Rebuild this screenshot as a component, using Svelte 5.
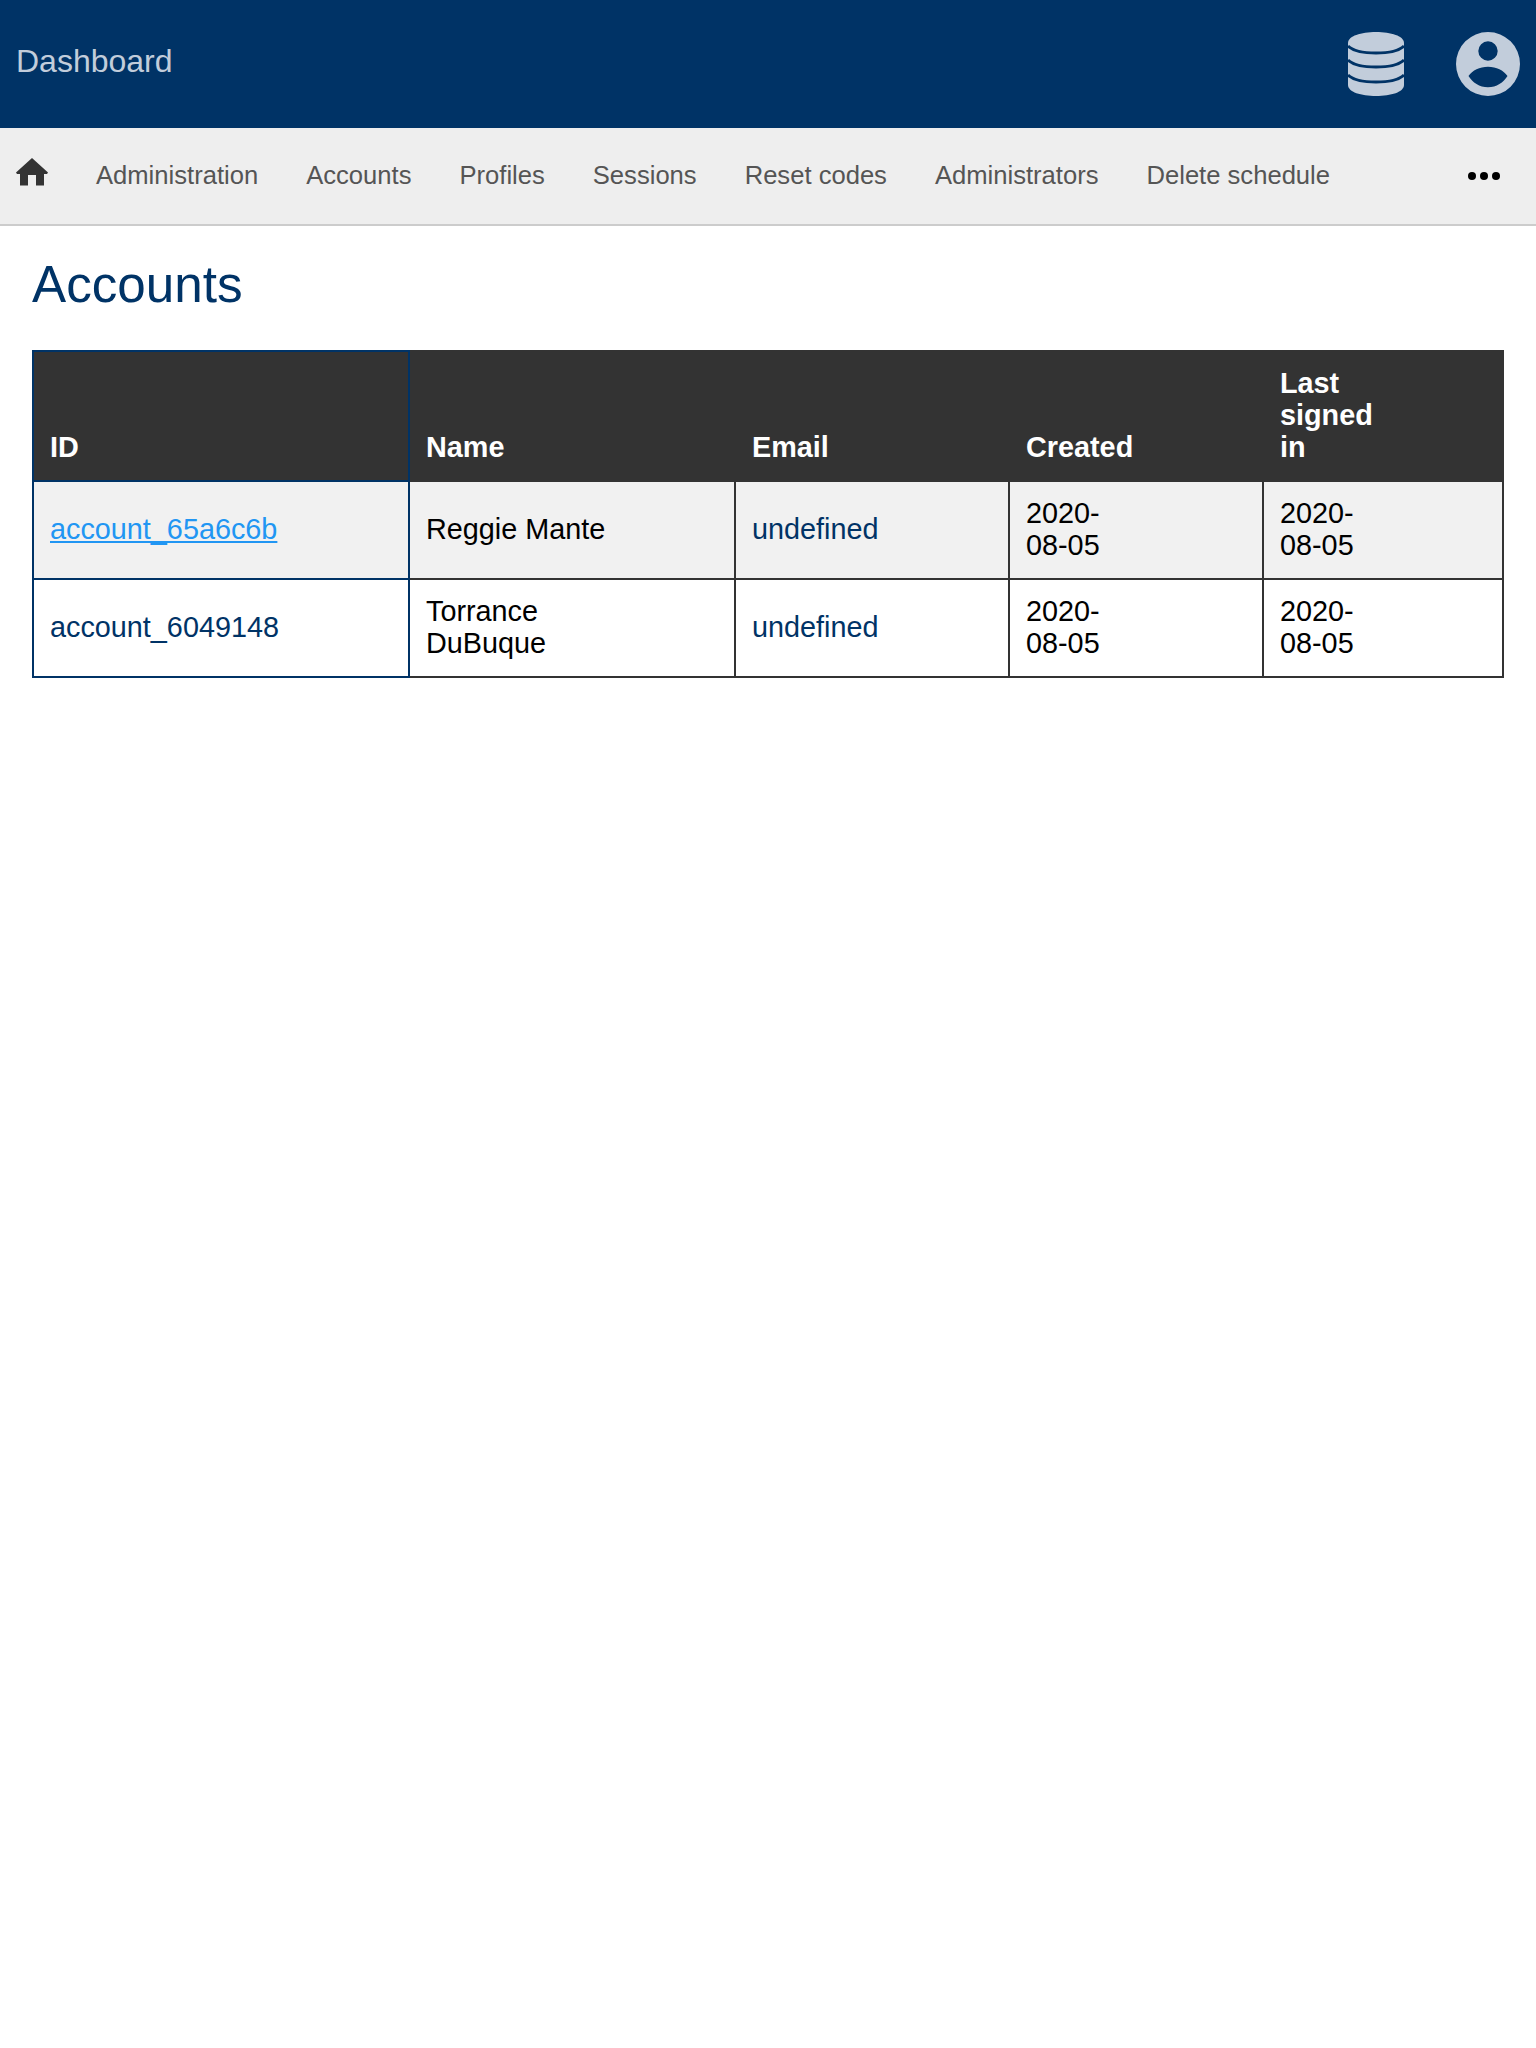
<script>
  const links = ['Administration','Accounts','Profiles','Sessions','Reset codes','Administrators','Delete schedule'];
  const cols = [376,326,274,254,240];
</script>

<header class="top">
  <span class="brand">Dashboard</span>
  <div class="top-icons">
    <svg class="db" viewBox="0 0 56 64" aria-hidden="true">
      <path class="body" d="M0 11C0 4 13 0 28 0s28 4 28 11v42c0 7-13 11-28 11S0 60 0 53z"/>
      <path class="cut" d="M0 14c5 5 16 7 28 7s23-2 28-7M0 28c5 5 16 7 28 7s23-2 28-7M0 43c5 5 16 7 28 7s23-2 28-7"/>
    </svg>
    <svg class="user" viewBox="0 0 64 64" aria-hidden="true"><path fill-rule="evenodd" d="M32 0a32 32 0 1 0 0 64a32 32 0 0 0 0-64zM32 9.300a9.700 9.700 0 1 1 0 19.400a9.700 9.700 0 0 1 0-19.400zM32 34.700c8.500 0 15.500 3.500 19.500 9.300C47.500 50.500 40.500 55.300 32 55.300S16.500 50.500 12.500 44C16.500 38.200 23.500 34.700 32 34.700z"/></svg>
  </div>
</header>

<nav class="nav">
  <svg class="home" viewBox="0 0 32 28" aria-hidden="true"><path d="M16 0 0 14.500l1 1.500h3v11.500h8V17h8v10.500h8V16h3l1-1.500z"/></svg>
  <ul class="links">
    {#each links as l}<li>{l}</li>{/each}
  </ul>
  <div class="more"><i></i><i></i><i></i></div>
</nav>

<main class="main">
  <h1>Accounts</h1>
  <table>
    <colgroup>{#each cols as c}<col style="width:{c}px">{/each}</colgroup>
    <thead>
      <tr>
        <th class="first">ID</th><th>Name</th><th>Email</th><th>Created</th><th class="narrow">Last signed in</th>
      </tr>
    </thead>
    <tbody>
      <tr class="odd">
        <td class="first"><a href="#a">account_65a6c6b</a></td>
        <td>Reggie Mante</td>
        <td class="navy">undefined</td>
        <td class="date">2020-08-05</td>
        <td class="date">2020-08-05</td>
      </tr>
      <tr>
        <td class="first navy">account_6049148</td>
        <td class="name">Torrance DuBuque</td>
        <td class="navy">undefined</td>
        <td class="date">2020-08-05</td>
        <td class="date">2020-08-05</td>
      </tr>
    </tbody>
  </table>
</main>

<style>
  :global(body) { margin: 0; background: #fff; font-family: "Liberation Sans", Arial, sans-serif; }
  .top { height: 128px; background: #003366; display: flex; align-items: center; justify-content: space-between; padding: 0 16px; box-sizing: border-box; }
  .brand { font-size: 32px; color: #c2cddb; position: relative; top: -3px; }
  .top-icons { display: flex; align-items: center; gap: 52px; }
  .top-icons svg { display: block; height: 64px; }
  .user { width: 64px; fill: #c2cddb; }
  .db { width: 56px; }
  .body { fill: #c2cddb; }
  .cut { fill: none; stroke: #003366; stroke-width: 3; }
  .nav { height: 96px; background: #eeeeee; border-bottom: 2px solid #cccccc; display: flex; align-items: center; padding: 0 16px; position: relative; }
  .home { width: 32px; height: 28px; fill: #333; display: block; position: relative; top: -4px; }
  .links { list-style: none; margin: 0 0 2px 48px; padding: 0; display: flex; gap: 48px; font-size: 25.6px; color: #555; }
  .more { margin-left: auto; display: flex; gap: 4px; margin-right: 20px; }
  .more i { width: 8px; height: 8px; border-radius: 50%; background: #000; display: block; }
  .main { padding: 0 32px; }
  h1 { margin: 0; padding-top: 29px; font-size: 51.2px; line-height: 59px; font-weight: 400; color: #003366; }
  table { margin-top: 36px; border-collapse: collapse; table-layout: fixed; width: 1472px; font-size: 28.8px; line-height: 32px; }
  th, td { border: 2px solid #333; padding: 15px 16px 17px; text-align: left; vertical-align: middle; }
  th { background: #333; color: #fff; font-weight: 700; vertical-align: bottom; }
  th.narrow { padding-right: 110px; }
  td.name { padding-right: 80px; }
  td.date { padding-right: 130px; }
  .first { border-color: #003366; }
  .odd td { background: #f1f1f1; }
  .navy { color: #003366; }
  a { color: #2196f3; }
</style>
